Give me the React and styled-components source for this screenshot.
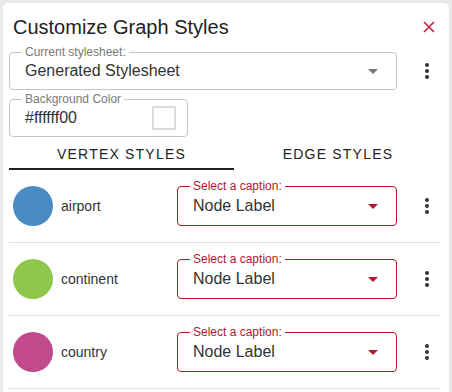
import React from "react";
import styled, { createGlobalStyle } from "styled-components";

const RED = "#b3172f";

const Global = createGlobalStyle`
  html, body { margin: 0; padding: 0; background: #e9e9e9; }
  body { font-family: "Liberation Sans", Arial, sans-serif; color: #222; overflow: hidden; }
  * { box-sizing: border-box; }
`;

const Panel = styled.div`
  margin: 3px 0 0 3px;
  width: 446px;
  height: 400px;
  background: #fff;
  border-radius: 5px;
  padding: 4px 8px 0 6px;
  display: flex;
  flex-direction: column;
`;

const Header = styled.div`
  height: 40px;
  display: flex;
  align-items: center;
  justify-content: space-between;
  padding: 0 6px 0 4px;
`;

const Title = styled.h1`
  margin: 0;
  font-size: 20px;
  font-weight: 400;
  color: #222;
`;

const CloseButton = styled.button`
  border: 0;
  background: none;
  padding: 0;
  width: 12px;
  height: 12px;
  display: flex;
  cursor: pointer;
`;

const FieldRow = styled.div`
  display: flex;
  align-items: center;
  margin-top: ${(p) => p.$mt || 0}px;
`;

const Outlined = styled.div`
  position: relative;
  height: ${(p) => p.$h || 38}px;
  width: ${(p) => (p.$w ? `${p.$w}px` : "auto")};
  flex: ${(p) => (p.$w ? "none" : "1")};
  border: 1px solid ${(p) => (p.$accent ? RED : "#c4c4c4")};
  border-radius: 4px;
  display: flex;
  align-items: center;
  padding: 0 ${(p) => p.$pr || 18}px 0 15px;
`;

const Legend = styled.span`
  position: absolute;
  top: -9px;
  left: 12px;
  padding: 0 3px;
  background: #fff;
  font-size: 12px;
  line-height: 16px;
  color: ${(p) => (p.$accent ? RED : "#7a7a7a")};
  white-space: nowrap;
`;

const Value = styled.span`
  flex: 1;
  font-size: 16px;
  color: #333;
  white-space: nowrap;
`;

const Swatch = styled.span`
  width: 24px;
  height: 24px;
  border: 2px solid #dcdcdc;
  background: #fff;
`;

const Caret = styled.svg`
  width: 10px;
  height: 5px;
  flex: none;
`;

const Kebab = styled.button`
  border: 0;
  background: none;
  padding: 0;
  width: 24px;
  height: 24px;
  margin: 0 2px 0 18px;
  flex: none;
  display: flex;
  align-items: center;
  justify-content: center;
  cursor: pointer;
`;

const Tabs = styled.div`
  display: flex;
  margin-top: 1px;
`;

const Tab = styled.div`
  width: ${(p) => (p.$w ? `${p.$w}px` : "auto")};
  flex: ${(p) => (p.$w ? "none" : "1")};
  text-align: center;
  font-size: 14px;
  line-height: 16px;
  letter-spacing: 1.2px;
  text-transform: uppercase;
  color: #222;
  padding: 8px 0 6px;
  border-bottom: 2px solid ${(p) => (p.$active ? "#222" : "transparent")};
`;

const StyleRow = styled.div`
  display: flex;
  align-items: center;
  padding: 16px 0;
  border-bottom: 1px solid #e0e0e0;
`;

const Identity = styled.div`
  width: 168px;
  flex: none;
  display: flex;
  align-items: center;
  gap: 8px;
  padding-left: 4px;
`;

const Dot = styled.span`
  width: 40px;
  height: 40px;
  border-radius: 50%;
  background: ${(p) => p.$color};
`;

const Name = styled.span`
  font-size: 14px;
  color: #333;
`;

const CaretIcon = ({ color }) => (
  <Caret viewBox="0 0 10 5">
    <path d="M0 0l5 5 5-5z" fill={color} />
  </Caret>
);

const MoreIcon = () => (
  <svg width="24" height="24" viewBox="0 0 24 24">
    <circle cx="12" cy="6" r="2" fill="#333" />
    <circle cx="12" cy="12" r="2" fill="#333" />
    <circle cx="12" cy="18" r="2" fill="#333" />
  </svg>
);

const vertices = [
  { name: "airport", color: "#4b8bc4" },
  { name: "continent", color: "#8fc64c" },
  { name: "country", color: "#c04a8a" },
];

export default function App() {
  return (
    <>
      <Global />
      <Panel>
        <Header>
          <Title>Customize Graph Styles</Title>
          <CloseButton aria-label="close">
            <svg width="12" height="12" viewBox="0 0 12 12">
              <path d="M1 1L11 11M11 1L1 11" stroke="#c8213b" strokeWidth="1.7" />
            </svg>
          </CloseButton>
        </Header>
        <FieldRow $mt={5}>
          <Outlined $h={38}>
            <Legend>Current stylesheet:</Legend>
            <Value>Generated Stylesheet</Value>
            <CaretIcon color="#777" />
          </Outlined>
          <Kebab aria-label="more">
            <MoreIcon />
          </Kebab>
        </FieldRow>
        <FieldRow $mt={9}>
          <Outlined $h={38} $w={179} $pr={11}>
            <Legend>Background Color</Legend>
            <Value>#ffffff00</Value>
            <Swatch />
          </Outlined>
        </FieldRow>
        <Tabs>
          <Tab $active $w={225}>Vertex Styles</Tab>
          <Tab $w={208}>Edge Styles</Tab>
        </Tabs>
        {vertices.map((v) => (
          <StyleRow key={v.name}>
            <Identity>
              <Dot $color={v.color} />
              <Name>{v.name}</Name>
            </Identity>
            <Outlined $h={40} $accent>
              <Legend $accent>Select a caption:</Legend>
              <Value>Node Label</Value>
              <CaretIcon color={RED} />
            </Outlined>
            <Kebab aria-label="more">
              <MoreIcon />
            </Kebab>
          </StyleRow>
        ))}
      </Panel>
    </>
  );
}
